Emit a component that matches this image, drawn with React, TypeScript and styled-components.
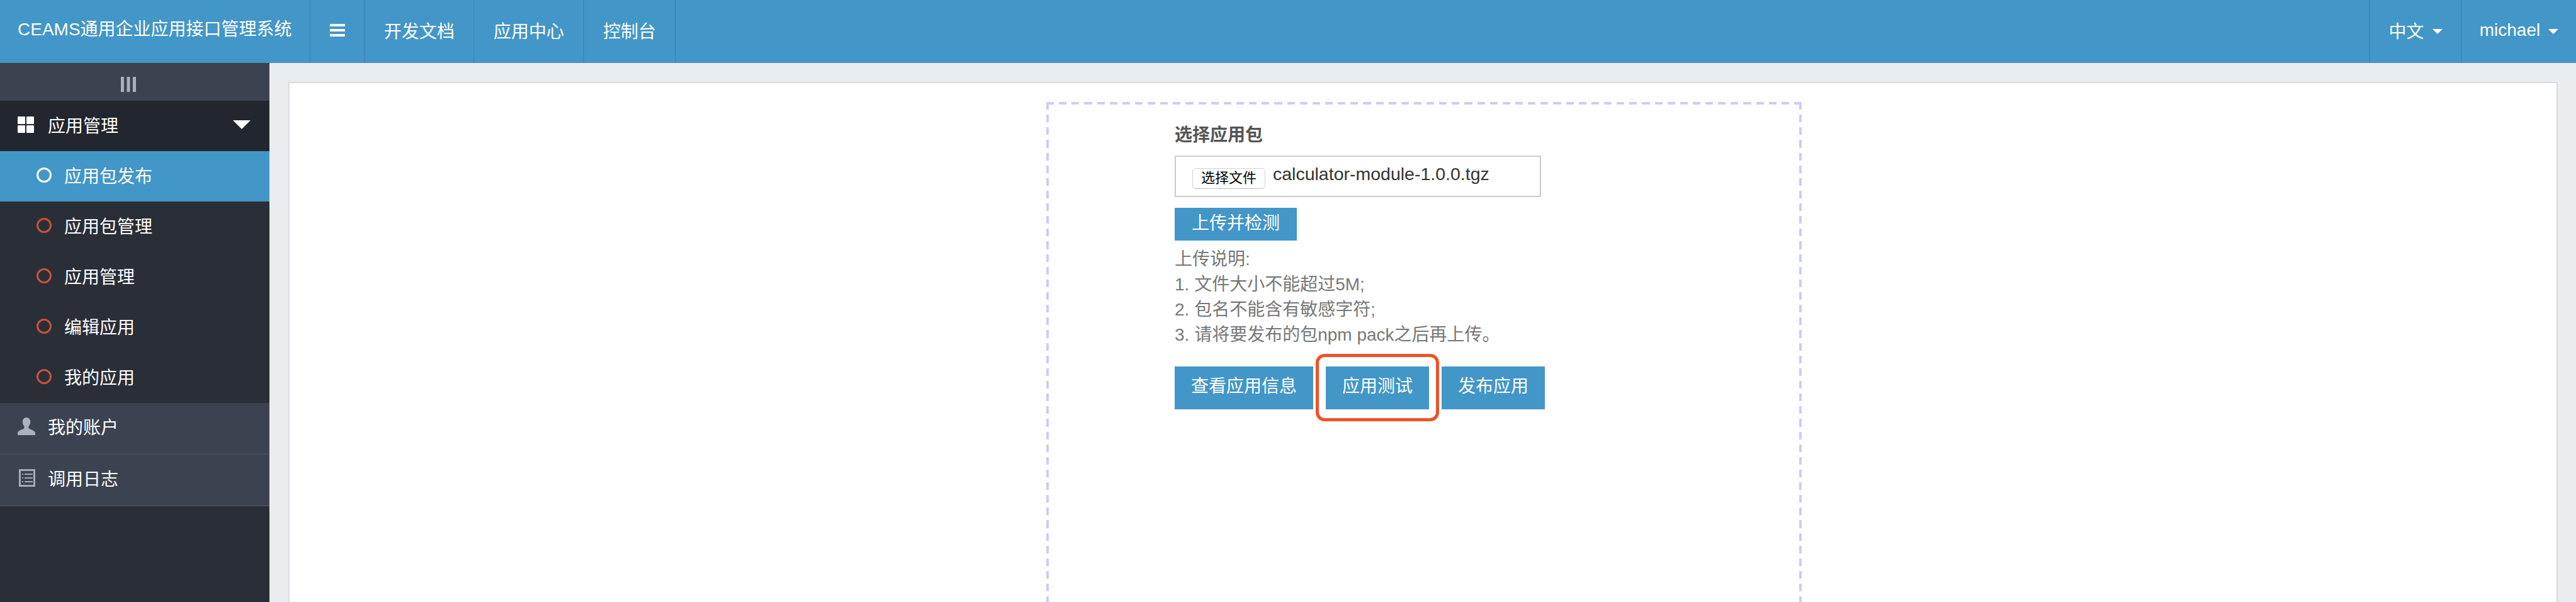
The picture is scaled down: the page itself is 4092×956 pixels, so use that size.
import React from 'react'
import styled, { createGlobalStyle } from 'styled-components'

const GlobalStyle = createGlobalStyle`
  html, body {
    margin: 0;
    padding: 0;
    height: 956px;
    overflow: hidden;
    background: #e9edf0;
    font-family: "Liberation Sans", "Noto Sans CJK SC", sans-serif;
  }
  * {
    box-sizing: border-box;
  }
`

const Page = styled.div`
  width: 4092px;
  height: 956px;
  display: flex;
  flex-direction: column;
  overflow: hidden;
`

const Header = styled.header`
  height: 100px;
  flex: none;
  display: flex;
  background: #4396c8;
  color: #fff;
`

const Brand = styled.div`
  width: 491px;
  padding-left: 28px;
  font-size: 28px;
  line-height: 94px;
  white-space: nowrap;
`

const NavItem = styled.div<{ $width: number }>`
  width: ${({ $width }) => $width}px;
  display: flex;
  align-items: center;
  justify-content: center;
  gap: 13px;
  border-left: 2px solid #3d8bbd;
  font-size: 28px;
  padding-bottom: 4px;
`

const NavEnd = styled.div`
  width: 2px;
  background: #3d8bbd;
`

const NavSpacer = styled.div`
  flex: 1;
`

const Caret = styled.span`
  width: 0;
  height: 0;
  margin-top: 3px;
  border-left: 8px solid transparent;
  border-right: 8px solid transparent;
  border-top: 8px solid #fff;
`

const Body = styled.div`
  flex: 1;
  display: flex;
  min-height: 0;
`

const Sidebar = styled.aside`
  width: 428px;
  flex: none;
  background: #2a2e37;
  color: #fff;
  font-size: 28px;
`

const Toggler = styled.div`
  height: 60px;
  background: #3b4351;
  display: flex;
  justify-content: center;
  padding: 22px 20px 0 0;
`

const GroupHead = styled.div`
  height: 80px;
  background: #22262e;
  display: flex;
  align-items: center;
  padding: 0 30px 4px 28px;
  gap: 22px;
`

const GroupArrow = styled.span`
  width: 0;
  height: 0;
  margin-left: auto;
  border-left: 14px solid transparent;
  border-right: 14px solid transparent;
  border-top: 14px solid #fff;
`

const SubItem = styled.div<{ $active?: boolean }>`
  height: 80px;
  display: flex;
  align-items: center;
  gap: 20px;
  padding: 0 0 5px 58px;
  background: ${({ $active }) => ($active ? '#4396c8' : 'transparent')};
`

const Ring = styled.span<{ $active?: boolean }>`
  width: 24px;
  height: 24px;
  border-radius: 50%;
  border: 3.5px solid ${({ $active }) => ($active ? '#fff' : '#c9533a')};
`

const TopItem = styled.div`
  height: 82px;
  background: #3b4351;
  border-bottom: 2px solid #444d5b;
  display: flex;
  align-items: center;
  gap: 20px;
  padding: 0 0 6px 28px;
`

const Content = styled.main`
  flex: 1;
  min-width: 0;
  padding: 30px 29px 0 30px;
`

const Panel = styled.section`
  height: 100%;
  background: #fff;
  border: 2px solid #d9dcde;
  border-bottom: 0;
  padding: 30px 0 0 3px;
`

const dashColor = '#ccccf8'
const dashRun = `repeating-linear-gradient(90deg, ${dashColor} 0 12.136px, transparent 12.136px 20.136px)`
const dashRise = `repeating-linear-gradient(180deg, ${dashColor} 0 12.136px, transparent 12.136px 20.136px)`

const DropZone = styled.div`
  width: 1200px;
  height: 1000px;
  margin: 0 auto;
  padding: 33px 0 0 204px;
  background:
    ${dashRun} left top / 100% 4px no-repeat,
    ${dashRise} left top / 4px 100% no-repeat,
    ${dashRise} right top / 4px 100% no-repeat;
`

const Form = styled.div`
  position: relative;
  width: 600px;
  color: #777;
  font-size: 28px;
`

const Label = styled.div`
  color: #555;
  font-weight: bold;
  line-height: 40px;
  margin-bottom: 12px;
`

const FileBox = styled.div`
  width: 582px;
  height: 66px;
  border: 2px solid #ccc;
  display: flex;
  align-items: center;
  gap: 12px;
  padding-left: 26px;
  color: #333;
  font-size: 28.5px;
`

const FileButton = styled.span`
  width: 116px;
  height: 33px;
  margin-top: 6px;
  border: 1px solid #d4d4d4;
  border-bottom-color: #bbb;
  border-radius: 5px;
  background: #fff;
  color: #000;
  font-size: 22px;
  line-height: 29px;
  text-align: center;
`

const FileName = styled.span`
  margin-bottom: 8px;
`

const Button = styled.div<{ $small?: boolean }>`
  height: ${({ $small }) => ($small ? 52 : 68)}px;
  line-height: ${({ $small }) => ($small ? 50 : 64)}px;
  padding: 0 ${({ $small }) => ($small ? 27 : 26)}px;
  background: #4396c8;
  color: #fff;
  white-space: nowrap;
`

const UploadRow = styled.div`
  display: flex;
  margin: 17px 0 10px;
`

const Notes = styled.div`
  line-height: 40px;
`

const ActionRow = styled.div`
  display: flex;
  gap: 20px;
  margin-top: 30px;
`

const Highlight = styled.div`
  position: absolute;
  left: 224px;
  top: 367px;
  width: 196px;
  height: 107px;
  border: 5px solid #f05228;
  border-radius: 14px;
`

const BarsIcon = () => (
  <svg width="24" height="20" viewBox="0 0 24 20" fill="#fff">
    <rect width="24" height="4" />
    <rect y="8" width="24" height="4" />
    <rect y="16" width="24" height="4" />
  </svg>
)

const CollapseIcon = () => (
  <svg width="24" height="24" viewBox="0 0 24 24" fill="#a8b1bb">
    <rect width="5" height="24" />
    <rect x="9.500" width="5" height="24" />
    <rect x="19" width="5" height="24" />
  </svg>
)

const GridIcon = () => (
  <svg width="26" height="26" viewBox="0 0 26 26" fill="#fff">
    <rect width="12" height="12" rx="1" />
    <rect x="14" width="12" height="12" rx="1" />
    <rect y="14" width="12" height="12" rx="1" />
    <rect x="14" y="14" width="12" height="12" rx="1" />
  </svg>
)

const UserIcon = () => (
  <svg width="28" height="28" viewBox="0 0 28 28" fill="#aab2bd">
    <path d="M14 0c4 0 6.200 3 6.200 7 0 3-1.200 5.600-2.800 7.200v2.400c0 1.200 2 1.800 5 3 3 1.200 5.600 2.600 5.600 6V28H0v-2.400c0-3.400 2.600-4.800 5.600-6 3-1.200 5-1.800 5-3v-2.400C9 12.600 7.800 10 7.800 7c0-4 2.200-7 6.200-7z" />
  </svg>
)

const LogIcon = () => (
  <svg width="26" height="28" viewBox="0 0 26 28" style={{ marginLeft: 2 }}>
    <rect x="1.500" y="1.500" width="23" height="25" fill="#3b4351" stroke="#a3acb8" strokeWidth="3" />
    <g fill="#a3acb8">
      <rect x="5" y="7" width="2" height="2" />
      <rect x="5" y="13" width="2" height="2" />
      <rect x="5" y="19" width="2" height="2" />
      <rect x="9" y="7" width="13" height="2" />
      <rect x="9" y="13" width="13" height="2" />
      <rect x="9" y="19" width="13" height="2" />
    </g>
  </svg>
)

const subItems = ['应用包管理', '应用管理', '编辑应用', '我的应用']

const App = () => (
  <Page>
    <GlobalStyle />
    <Header>
      <Brand>CEAMS通用企业应用接口管理系统</Brand>
      <NavItem $width={87}>
        <BarsIcon />
      </NavItem>
      <NavItem $width={174}>开发文档</NavItem>
      <NavItem $width={174}>应用中心</NavItem>
      <NavItem $width={146}>控制台</NavItem>
      <NavEnd />
      <NavSpacer />
      <NavItem $width={146}>
        中文
        <Caret />
      </NavItem>
      <NavItem $width={183}>
        michael
        <Caret />
      </NavItem>
    </Header>
    <Body>
      <Sidebar>
        <Toggler>
          <CollapseIcon />
        </Toggler>
        <GroupHead>
          <GridIcon />
          应用管理
          <GroupArrow />
        </GroupHead>
        <SubItem $active>
          <Ring $active />
          应用包发布
        </SubItem>
        {subItems.map((label) => (
          <SubItem key={label}>
            <Ring />
            {label}
          </SubItem>
        ))}
        <TopItem>
          <UserIcon />
          我的账户
        </TopItem>
        <TopItem>
          <LogIcon />
          调用日志
        </TopItem>
      </Sidebar>
      <Content>
        <Panel>
          <DropZone>
            <Form>
              <Label>选择应用包</Label>
              <FileBox>
                <FileButton>选择文件</FileButton>
                <FileName>calculator-module-1.0.0.tgz</FileName>
              </FileBox>
              <UploadRow>
                <Button $small>上传并检测</Button>
              </UploadRow>
              <Notes>
                上传说明:
                <br />
                1. 文件大小不能超过5M;
                <br />
                2. 包名不能含有敏感字符;
                <br />
                3. 请将要发布的包npm pack之后再上传。
              </Notes>
              <ActionRow>
                <Button>查看应用信息</Button>
                <Button>应用测试</Button>
                <Button>发布应用</Button>
              </ActionRow>
              <Highlight />
            </Form>
          </DropZone>
        </Panel>
      </Content>
    </Body>
  </Page>
)

export default App
